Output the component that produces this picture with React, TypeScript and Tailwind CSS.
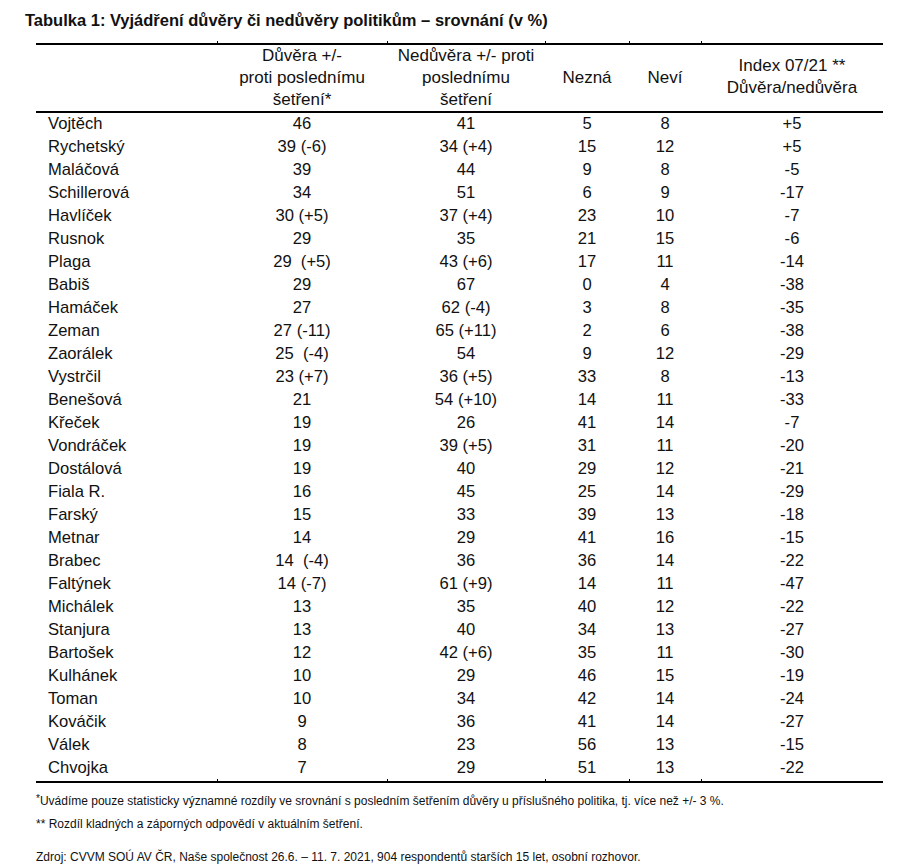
const rows: [string, string, string, string, string, string][] = [
  ["Vojtěch", "46", "41", "5", "8", "+5"],
  ["Rychetský", "39 (-6)", "34 (+4)", "15", "12", "+5"],
  ["Maláčová", "39", "44", "9", "8", "-5"],
  ["Schillerová", "34", "51", "6", "9", "-17"],
  ["Havlíček", "30 (+5)", "37 (+4)", "23", "10", "-7"],
  ["Rusnok", "29", "35", "21", "15", "-6"],
  ["Plaga", "29  (+5)", "43 (+6)", "17", "11", "-14"],
  ["Babiš", "29", "67", "0", "4", "-38"],
  ["Hamáček", "27", "62 (-4)", "3", "8", "-35"],
  ["Zeman", "27 (-11)", "65 (+11)", "2", "6", "-38"],
  ["Zaorálek", "25  (-4)", "54", "9", "12", "-29"],
  ["Vystrčil", "23 (+7)", "36 (+5)", "33", "8", "-13"],
  ["Benešová", "21", "54 (+10)", "14", "11", "-33"],
  ["Křeček", "19", "26", "41", "14", "-7"],
  ["Vondráček", "19", "39 (+5)", "31", "11", "-20"],
  ["Dostálová", "19", "40", "29", "12", "-21"],
  ["Fiala R.", "16", "45", "25", "14", "-29"],
  ["Farský", "15", "33", "39", "13", "-18"],
  ["Metnar", "14", "29", "41", "16", "-15"],
  ["Brabec", "14  (-4)", "36", "36", "14", "-22"],
  ["Faltýnek", "14 (-7)", "61 (+9)", "14", "11", "-47"],
  ["Michálek", "13", "35", "40", "12", "-22"],
  ["Stanjura", "13", "40", "34", "13", "-27"],
  ["Bartošek", "12", "42 (+6)", "35", "11", "-30"],
  ["Kulhánek", "10", "29", "46", "15", "-19"],
  ["Toman", "10", "34", "42", "14", "-24"],
  ["Kováčik", "9", "36", "41", "14", "-27"],
  ["Válek", "8", "23", "56", "13", "-15"],
  ["Chvojka", "7", "29", "51", "13", "-22"],
];

// column widths: jméno | důvěra | nedůvěra | nezná | neví | index
const cols = "grid grid-cols-[181px_170px_158px_84px_72px_182px]";

function Ticks() {
  return (
    <div className={`${cols} h-[2px]`}>
      <div />
      <div className="border-l border-black" />
      <div className="border-l border-black" />
      <div className="border-l border-black" />
      <div className="border-l border-black" />
      <div className="border-l border-black" />
    </div>
  );
}

export default function App() {
  return (
    <div className="w-[911px] h-[866px] bg-white text-[#111] font-['Liberation_Sans',Arial,sans-serif]">
      <h1 className="pt-[10px] pl-[25px] text-[16.5px] leading-[20px] font-bold">
        Tabulka 1: Vyjádření důvěry či nedůvěry politikům – srovnání (v %)
      </h1>

      <div className="ml-[36px] w-[847px] mt-[11px]">
        <Ticks />
        <div className="h-[2px] bg-black" />

        {/* Hlavička */}
        <div className={`${cols} h-[66px] text-[17px] leading-[22px] text-center`}>
          <div />
          <div>
            Důvěra +/-
            <br />
            proti poslednímu
            <br />
            šetření*
          </div>
          <div>
            Nedůvěra +/- proti
            <br />
            poslednímu
            <br />
            šetření
          </div>
          <div className="flex items-center justify-center">Nezná</div>
          <div className="flex items-center justify-center">Neví</div>
          <div className="flex flex-col items-center justify-center pb-[2px]">
            <span>Index 07/21 **</span>
            <span>Důvěra/nedůvěra</span>
          </div>
        </div>
        <div className="h-[1.5px] bg-black" />

        {/* Data */}
        <div className="text-[16.6px] -mt-[1px]">
          {rows.map((r) => (
            <div key={r[0]} className={`${cols} h-[23px] leading-[23px]`}>
              <div className="pl-[12px]">{r[0]}</div>
              {r.slice(1).map((v, i) => (
                <div key={i} className="text-center whitespace-pre">
                  {v}
                </div>
              ))}
            </div>
          ))}
        </div>

        <Ticks />
        <div className="h-[2px] bg-black" />
      </div>

      {/* Poznámky */}
      <div className="pl-[36px] text-[12px] leading-[16px]">
        <p className="mt-[8px]">
          <span className="align-[3px] text-[10px]">*</span>
          Uvádíme pouze statisticky významné rozdíly ve srovnání s posledním šetřením důvěry u příslušného politika, tj. více než +/- 3 %.
        </p>
        <p className="mt-[7px]">** Rozdíl kladných a záporných odpovědí v aktuálním šetření.</p>
        <p className="mt-[17px]">
          Zdroj: CVVM SOÚ AV ČR, Naše společnost 26.6. – 11. 7. 2021, 904 respondentů starších 15 let, osobní rozhovor.
        </p>
      </div>
    </div>
  );
}
